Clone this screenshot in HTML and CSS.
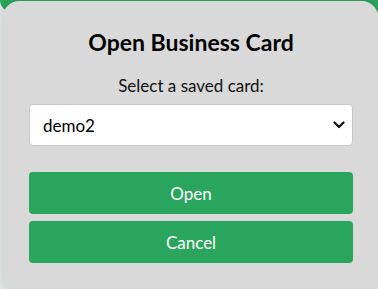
FILE: index.html
```html
<!DOCTYPE html>
<html>
<head>
<meta charset="utf-8">
<link rel="stylesheet" href="styles.css">
</head>
<body>
<div class="page">
  <div class="page-bar"></div>
</div>
<div class="dialog">
  <h2 class="title">Open Business Card</h2>
  <p class="label">Select a saved card:</p>
  <div class="select-wrap">
    <select class="select">
      <option>demo2</option>
    </select>
    <svg class="chevron" width="12" height="8" viewBox="0 0 12 8"><path d="M1.5 1.5 L6 6 L10.5 1.5" fill="none" stroke="#111" stroke-width="2.2" stroke-linecap="round" stroke-linejoin="round"/></svg>
  </div>
  <div class="actions">
    <button class="btn">Open</button>
    <button class="btn">Cancel</button>
  </div>
</div>
</body>
</html>
```

FILE: styles.css
```css
html, body {
  margin: 0;
  padding: 0;
  width: 378px;
  height: 289px;
  overflow: hidden;
}
body {
  background: #e1e5e3;
  font-family: Lato, "Open Sans", sans-serif;
}
.page {
  height: 289px;
}
.page-bar {
  height: 12px;
  background: #2aa55c;
  border-radius: 0 0 0 30px;
}
.dialog {
  position: absolute;
  left: 3px;
  top: 1px;
  width: 375px;
  height: 294px;
  box-sizing: border-box;
  padding: 0 25px 0 26px;
  background: #d9d9d9;
  border-radius: 16px;
  box-shadow: 0 0 6px rgba(0,0,0,0.12);
  text-align: center;
}
.title {
  margin: 0;
  padding-top: 27px;
  font-size: 23px;
  line-height: 28px;
  font-weight: 700;
  color: #000;
}
.label {
  margin: 20px 0 0;
  font-size: 17px;
  line-height: 20px;
  color: #111;
}
.select-wrap {
  position: relative;
  margin-top: 8px;
}
.select {
  display: block;
  width: 100%;
  height: 42px;
  box-sizing: border-box;
  appearance: none;
  -webkit-appearance: none;
  background: #fff;
  border: 1px solid #c8c8c8;
  border-radius: 4px;
  padding: 0 13px;
  font-family: inherit;
  font-size: 17px;
  color: #000;
}
.chevron {
  position: absolute;
  right: 8px;
  top: 17px;
}
.actions {
  display: flex;
  flex-direction: column;
  gap: 7px;
  margin-top: 26px;
}
.btn {
  height: 42px;
  border: none;
  border-radius: 4px;
  background: #29a55d;
  color: #fff;
  font-family: inherit;
  font-size: 17px;
}
```
